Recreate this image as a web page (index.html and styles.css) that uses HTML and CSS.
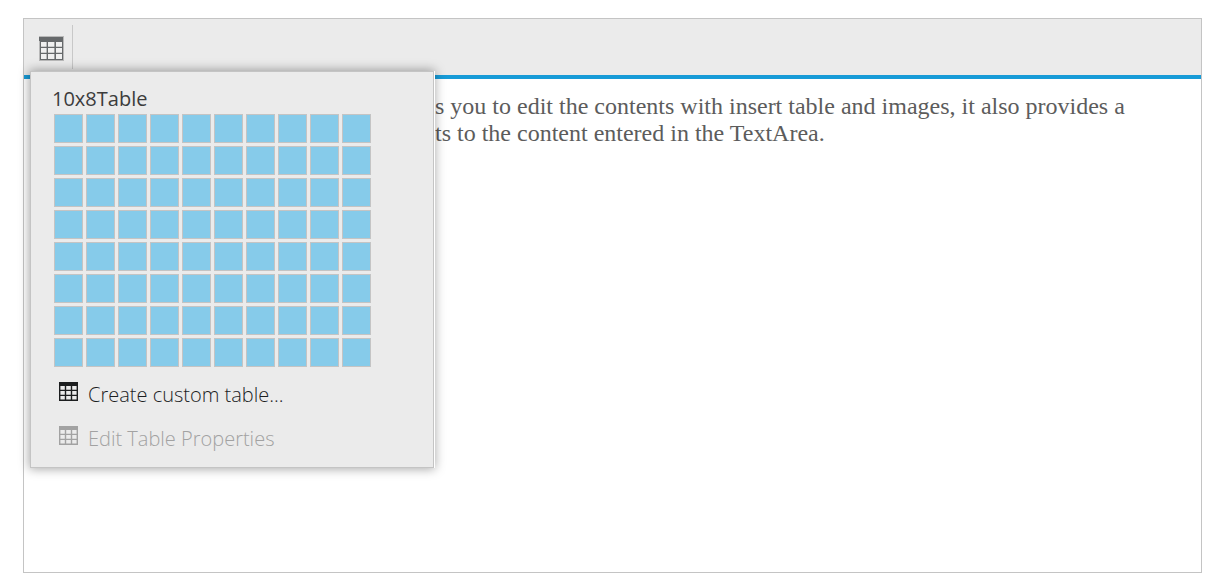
FILE: index.html
```html
<!DOCTYPE html>
<html lang="en">
<head>
<meta charset="utf-8">
<title>Rich text editor</title>
<link rel="stylesheet" href="styles.css">
</head>
<body>
<main class="editor">
  <div class="toolbar" role="toolbar" aria-label="Formatting">
    <div class="tool-group">
      <button class="tool" type="button" aria-label="Insert table" aria-expanded="true">
        <svg class="tool-icon" viewBox="0 0 25 25" aria-hidden="true">
          <path fill="#b9b9b9" d="M0 0h25v25H0z"/>
          <path fill="#66696b" d="M0 1h24v4H0z"/>
          <path fill="#66696b" d="M1 5h23v19H1z"/>
          <path fill="#f0f0f0" d="M2 6h5.6v4.7H2zM9 6h6.4v4.7H9zM17 6h6v4.7h-6zM2 12h5.6v4.7H2zM9 12h6.4v4.7H9zM17 12h6v4.7h-6zM2 18h5.6v5H2zM9 18h6.4v5H9zM17 18h6v5h-6z"/>
        </svg>
      </button>
    </div>
    <section class="menu" aria-label="Table options">
      <h2 class="menu-title">10x8Table</h2>
      <div class="size-grid"></div>
      <button class="menu-item" type="button">
        <svg class="menu-icon" viewBox="0 0 20 20" aria-hidden="true"><use href="#table"/></svg>
        <span>Create custom table...</span>
      </button>
      <button class="menu-item" type="button" disabled>
        <svg class="menu-icon" viewBox="0 0 20 20" aria-hidden="true"><use href="#table"/></svg>
        <span>Edit Table Properties</span>
      </button>
    </section>
  </div>
  <div class="content" contenteditable="true" role="textbox" aria-label="Content" spellcheck="false">s you to edit the contents with insert table and images, it also provides a<br>ts to the content entered in the TextArea.</div>
</main>
<svg class="symbols" aria-hidden="true">
  <symbol id="table" viewBox="0 0 20 20">
    <path fill="currentColor" fill-rule="evenodd" d="M0 0h19v19H0zM1.4 4v3.8h4.4V4zM7.2 4v3.8h4.6V4zM13.2 4v3.8h4.4V4zM1.4 9v3.8h4.4V9zM7.2 9v3.8h4.6V9zM13.2 9v3.8h4.4V9zM1.4 14v3.6h4.4V14zM7.2 14v3.6h4.6V14zM13.2 14v3.6h4.4V14z"/>
  </symbol>
</svg>
<script src="script.js"></script>
</body>
</html>
```
FILE: styles.css
```css
* { box-sizing: border-box; }
body {
  margin: 0;
  min-height: 100vh;
  padding: 18px 29px 15px 23px;
  display: flex;
  background: #fff;
}
.editor {
  flex: 1;
  display: flex;
  flex-direction: column;
  border: 1px solid #c4c4c4;
}
.toolbar {
  position: relative;
  padding: 6px 0;
  background: #ebebeb;
  border-bottom: 4px solid #179bd7;
}
.tool-group {
  display: inline-flex;
  height: 44px;
  padding: 2px 8px 0 15px;
  border-right: 1px solid #c8c8c8;
  vertical-align: top;
}
.tool, .menu-item {
  padding: 0;
  border: 0;
  background: none;
  display: flex;
  align-items: center;
}
.tool-icon { width: 25px; height: 25px; }
.menu {
  position: absolute;
  top: 52px;
  left: 6px;
  width: 404px;
  padding: 12px 23px 6px;
  background: #ebebeb;
  border: 1px solid #c4c4c4;
  box-shadow: 1px 0 0 #fff, 0 0 10px 1px rgba(0, 0, 0, 0.35);
  font-family: "Segoe UI", "Open Sans", sans-serif;
  color: #3c3c3c;
}
.menu-title {
  margin: 0 0 0 -2px;
  font-size: 20px;
  line-height: 30px;
  font-weight: 400;
}
.size-grid {
  display: grid;
  grid-template-columns: repeat(10, 29px);
  gap: 3px;
  margin-bottom: 6px;
}
.cell {
  height: 29px;
  padding: 0;
  border: 1px solid #c4c4c4;
  background: #86cbea;
}
.menu-item {
  width: 100%;
  height: 44px;
  padding-left: 5px;
  gap: 9px;
  font: 300 20px/28px "Segoe UI", "Open Sans", sans-serif;
  color: #1c1e1f;
}
.menu-item:disabled { color: #a2a2a2; }
.menu-icon { width: 20px; height: 20px; margin-bottom: 6px; }
.content {
  flex: 1;
  padding: 14px 12px 14px 411px;
  font: 24px/27px "Liberation Serif", "Times New Roman", serif;
  color: #5c5c5c;
}
.symbols { display: none; }
```
FILE: script.js
```js
const grid = document.querySelector('.size-grid');
for (let row = 1; row <= 8; row++) {
  for (let column = 1; column <= 10; column++) {
    const cell = document.createElement('button');
    cell.type = 'button';
    cell.className = 'cell';
    cell.setAttribute('aria-label', `${column} by ${row} table`);
    grid.append(cell);
  }
}
```
